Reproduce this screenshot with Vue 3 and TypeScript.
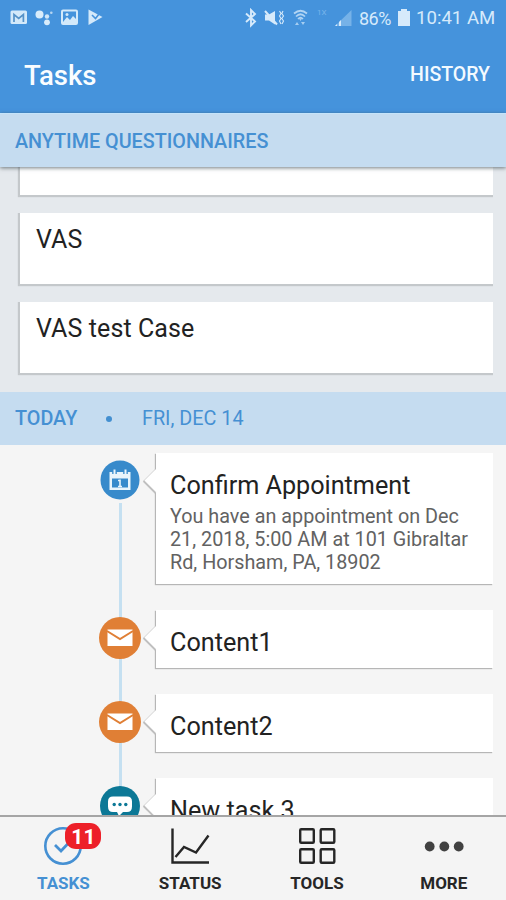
<script setup lang="ts">
interface Task {
  title: string
  detail?: string
  kind: 'calendar' | 'mail' | 'chat'
}

const questionnaires: string[] = ['', 'VAS', 'VAS test Case']

const tasks: Task[] = [
  {
    title: 'Confirm Appointment',
    detail: 'You have an appointment on Dec\n21, 2018, 5:00 AM at 101 Gibraltar\nRd, Horsham, PA, 18902',
    kind: 'calendar',
  },
  { title: 'Content1', kind: 'mail' },
  { title: 'Content2', kind: 'mail' },
  { title: 'New task 3', kind: 'chat' },
]

const tabs: string[] = ['TASKS', 'STATUS', 'TOOLS', 'MORE']
const badgeCount = 11
</script>

<template>
  <div class="screen">
    <header class="top">
      <div class="status-bar">
        <svg class="notices" viewBox="0 0 96 20" width="96" height="20">
          <rect x="1.500" y="2.500" width="16.500" height="13.500" rx="1.500" fill="#d3e9fa" />
          <path d="M5 14V6.500L9.700 10.500L14.400 6.500V14" fill="none" stroke="#5592c8" stroke-width="1.700" />
          <circle cx="30.500" cy="6.500" r="4" fill="#d8ecfb" />
          <circle cx="38" cy="8.500" r="2.200" fill="#d0e6f8" />
          <circle cx="42.300" cy="4.800" r="1.300" fill="#b5d5f1" />
          <circle cx="38" cy="14.300" r="2.900" fill="#d8ecfb" />
          <rect x="53" y="2.500" width="15" height="13.500" rx="1" fill="none" stroke="#d3e9fa" stroke-width="2" />
          <path d="M54 14L58 9L61 12L64 8L68 12V15H54Z" fill="#d3e9fa" />
          <circle cx="58" cy="6.500" r="1.500" fill="#d3e9fa" />
          <path d="M79.500 1.500L93.500 9L79.500 17Z" fill="#d3e9fa" />
          <path d="M83 7L86.500 10.500L92 3.500" fill="none" stroke="#4593dc" stroke-width="1.600" />
        </svg>
        <div class="system">
          <svg viewBox="0 0 112 22" width="112" height="22">
            <g fill="none" stroke="#d6eafb">
              <path d="M3 5.500L12 13.500L8 17.500V2L12 6L3 14" stroke-width="1.900" />
              <path d="M22 3L34 16.500" stroke-width="2" />
              <path d="M36.500 3L38 5.500L36.500 8L38 10.500L36.500 13L38 16M40 3L38.800 5.500L40.500 8L38.800 10.500L40.500 13L39 16" stroke-width="1.100" />
              <path d="M51 5.500Q57.500 0 64 5.500M53 8.500Q57.500 4 62 8.500M55 11Q57.500 8.500 60 11" stroke-width="1.700" opacity=".75" />
            </g>
            <path d="M22 6.500H26L32 3V16.500L26 12.500H22Z" fill="#d6eafb" />
            <path d="M56 10.500H59L57.500 13ZM54 14L56 17H52ZM60 17L58 14H62Z" fill="#a5cef2" />
            <path d="M92 18L108.500 2V18Z" fill="#76b2e8" />
            <path d="M92 18L94 16V18ZM96 18V14L98 12V18Z" fill="#d6eafb" />
          </svg>
          <span class="network">1X</span>
          <span class="percent">86%</span>
          <svg class="battery" viewBox="0 0 12 17" width="12" height="17">
            <path d="M3 0H9V2H12V17H0V2H3Z" fill="#d6eafb" />
          </svg>
          <span class="clock">10:41 AM</span>
        </div>
      </div>
      <div class="app-bar">
        <h1>Tasks</h1>
        <button class="history">HISTORY</button>
      </div>
    </header>

    <div class="section anytime"><span class="anytime-label">ANYTIME QUESTIONNAIRES</span></div>

    <main class="content">
      <div class="questionnaires">
        <div v-for="(name, i) in questionnaires" :key="i" class="q-card"><span>{{ name }}</span></div>
      </div>

      <div class="section today">
        <span class="today-label">TODAY</span>
        <i class="dot"></i>
        <span class="date">FRI, DEC 14</span>
      </div>

      <div class="timeline">
        <article v-for="task in tasks" :key="task.title" class="task" :class="task.kind">
          <div class="rail">
            <svg class="marker" viewBox="0 0 42 42" width="42" height="42">
              <template v-if="task.kind === 'calendar'">
                <circle cx="21" cy="21" r="19.500" fill="#378acb" />
                <path d="M10.500 13H31.500V31H10.500Z" fill="#e9f4fb" />
                <path d="M13 19.500H29V28.500H13Z" fill="#378acb" />
                <path d="M15.500 10.500V15M26.500 10.500V15" stroke="#378acb" stroke-width="4.600" />
                <path d="M15.500 10.500V15.500M26.500 10.500V15.500" stroke="#e9f4fb" stroke-width="2" />
                <path d="M21 20.500V27.500M19 21.500H21M19 27.500H23" stroke="#e9f4fb" stroke-width="1.600" />
              </template>
              <template v-else-if="task.kind === 'mail'">
                <circle cx="21" cy="21" r="21" fill="#e07f35" />
                <rect x="8.500" y="12.500" width="25" height="16.500" fill="#fff" />
                <path d="M8 14L21 22L34 14" fill="none" stroke="#e07f35" stroke-width="2" />
              </template>
              <template v-else>
                <circle cx="21" cy="21" r="20" fill="#0c7896" />
                <path d="M14 11.500H28Q33 11.500 33 16.500V21.500Q33 27 28 27H24L20 31L18 27H14Q9 27 9 21.500V16.500Q9 11.500 14 11.500Z" fill="#fff" />
                <g fill="#0c7896"><circle cx="15.200" cy="19.500" r="1.700" /><circle cx="21" cy="19.500" r="1.700" /><circle cx="26.800" cy="19.500" r="1.700" /></g>
              </template>
            </svg>
          </div>
          <div class="task-card">
            <svg class="pointer" viewBox="0 0 15 28" width="15" height="28">
              <path d="M15 1L2 14L15 27Z" fill="#fff" />
              <path d="M13.500 2L1.500 14" fill="none" stroke="#d6d6d6" stroke-width="1" />
              <path d="M1.500 14L13.500 26" fill="none" stroke="#bfbfbf" stroke-width="1.800" />
            </svg>
            <h2>{{ task.title }}</h2>
            <p v-if="task.detail">{{ task.detail }}</p>
          </div>
        </article>
      </div>
    </main>

    <nav class="tabs">
      <div v-for="(tab, i) in tabs" :key="tab" class="tab" :class="{ active: i === 0 }">
        <div class="tab-icon">
          <svg viewBox="0 0 42 42" width="42" height="42" fill="none" stroke="currentColor">
            <template v-if="i === 0">
              <circle cx="21" cy="21" r="17.700" stroke-width="2.600" />
              <path d="M13 20L19 26L29 15.500" stroke-width="2.800" />
            </template>
            <template v-else-if="i === 1">
              <path d="M3.500 3.500V37.500H40" stroke-width="2.400" />
              <path d="M6.500 32L15 22L27 27.500L39.500 10.500" stroke-width="2.400" />
            </template>
            <template v-else-if="i === 2">
              <g stroke-width="2.400">
                <rect x="4.200" y="4.200" width="13.600" height="13.600" rx="1" /><rect x="24.700" y="4.200" width="13.600" height="13.600" rx="1" />
                <rect x="4.200" y="24.200" width="13.600" height="13.600" rx="1" /><rect x="24.700" y="24.200" width="13.600" height="13.600" rx="1" />
              </g>
            </template>
            <g v-else fill="#414141" stroke="none">
              <circle cx="6.700" cy="21.500" r="4.900" /><circle cx="21.300" cy="21.500" r="4.900" /><circle cx="35.700" cy="21.500" r="4.900" />
            </g>
          </svg>
          <span v-if="i === 0" class="badge">{{ badgeCount }}</span>
        </div>
        <span class="tab-label">{{ tab }}</span>
      </div>
    </nav>
  </div>
</template>

<style>
body { margin: 0; }
</style>

<style scoped>
* { box-sizing: border-box; }
.screen {
  width: 506px; height: 900px; display: flex; flex-direction: column; overflow: hidden;
  font-family: Roboto, sans-serif; background: #f5f5f5; color: #222;
}
.top { height: 113px; flex: none; background: #4593dc; }
.status-bar { height: 36px; display: flex; justify-content: space-between; padding: 8px 11px 0 9px; }
.system { display: flex; align-items: flex-start; color: #d6eafb; font-size: 18px; line-height: 21px; position: relative; white-space: nowrap; }
.network { position: absolute; left: 74px; top: 0; font-size: 8px; line-height: 10px; color: #79b5eb; }
.percent { margin-left: 4px; width: 35px; letter-spacing: -.5px; }
.battery { margin: 1px 6px 0 4px; }
.clock { width: 79px; font-size: 18.6px; }
.app-bar { height: 77px; display: flex; align-items: center; justify-content: space-between; padding: 0 16px 0 24px; }
h1 { margin: 0; padding-top: 2px; font-size: 27.5px; line-height: 36px; font-weight: 500; color: #fafdff; }
.history { border: 0; padding: 0; background: none; color: #f3faff; font: 500 19.5px/24px Roboto, sans-serif; }
.section { flex: none; background: #c5dcf0; color: #4590d3; display: flex; align-items: center; padding: 0 15px; font-size: 20px; line-height: 24px; white-space: nowrap; }
.anytime { height: 54px; font-size: 19.75px; font-weight: 500; border-top: 1px solid #c5e4fa; position: relative; z-index: 1; box-shadow: 0 1px 4px rgba(65, 80, 85, .75); padding-top: 2px; }
.content { flex: 1; min-height: 0; overflow: hidden; display: flex; flex-direction: column; }
.questionnaires { height: 225px; flex: none; background: #e5e9ed; display: flex; flex-direction: column; gap: 18px; padding: 0 13px 0 20px; }
.q-card { flex: none; height: 71px; background: #fff; box-shadow: -1px 1px 1px 1px #c4c8cb; clip-path: inset(0 0 -3px -3px); padding: 12px 16px; font-size: 25px; line-height: 30px; letter-spacing: .1px; }
.q-card:first-child { height: 28px; }
.today { height: 53px; font-size: 19.8px; }
.today-label { font-weight: 500; width: 91px; }
.dot { width: 6px; height: 6px; border-radius: 50%; background: #438fd0; margin-right: 30px; }
.timeline { flex: 1; padding: 8px 13px 0 99px; background: #f5f5f5; }
.task { display: flex; gap: 15px; }
.rail { width: 42px; display: flex; justify-content: center; background: linear-gradient(#c5e0f1, #c5e0f1) 20px 0 / 3px 100% no-repeat; }
.calendar .rail { background-position: 20px 50px; }
.marker { margin-top: 7px; flex: none; }
.calendar .marker { margin-top: 6px; }
.task-card { flex: 1; position: relative; background: #fff; margin-bottom: 26px; height: 58px; padding: 17px 14px 0; box-shadow: -1px 1px 1px #b6b6b6; }
.calendar .task-card { height: 131px; }
.pointer { position: absolute; left: -14px; top: 14px; }
h2 { margin: 0; font-size: 25.2px; line-height: 32px; font-weight: 400; white-space: nowrap; }
p { margin: 3px 0 0; color: #626262; font-size: 19.8px; line-height: 23px; white-space: pre; }
.tabs { height: 85px; flex: none; border-top: 2px solid #a5a5a5; background: #f4f4f4; display: grid; grid-template-columns: repeat(4, 126.8px); }
.tab { display: flex; flex-direction: column; align-items: center; padding-top: 8px; color: #262626; }
.tab.active { color: #4590d3; }
.tab-icon { height: 42px; position: relative; }
.badge { position: absolute; left: 23px; top: -2px; width: 36px; height: 26px; border-radius: 11px; background: #ed2029; color: #fff; text-align: center; font-size: 21px; line-height: 28px; font-weight: 700; }
.tab-label { margin-top: 6px; font-size: 17px; line-height: 20px; font-weight: 700; }
</style>
